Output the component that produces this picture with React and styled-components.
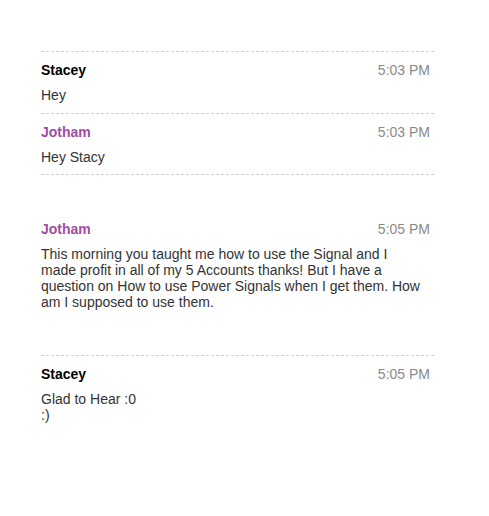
import React from 'react'
import styled, { createGlobalStyle } from 'styled-components'

const GlobalStyle = createGlobalStyle`
  html, body {
    margin: 0;
    padding: 0;
    background: #fff;
  }
  body {
    font-family: "Liberation Sans", Arial, sans-serif;
  }
`

const Thread = styled.div`
  width: 393px;
  padding: 51px 0 40px 41px;
`

const Message = styled.div`
  border-top: 1px dashed #cfcfcf;
  padding: ${({ $roomy }) => ($roomy ? '45.5px 0 45px' : '10px 0 9.5px')};
`

const Header = styled.div`
  display: flex;
  justify-content: space-between;
  align-items: center;
  padding-right: 4px;
  line-height: 16px;
  font-size: 14px;
`

const Author = styled.span`
  font-weight: bold;
  color: ${({ $me }) => ($me ? '#a34ca3' : '#000')};
`

const Time = styled.span`
  color: #8a8a8a;
`

const Body = styled.div`
  margin-top: 9px;
  padding-right: 8px;
  font-size: 14px;
  line-height: 16px;
  color: #333;
`

const messages = [
  { author: 'Stacey', time: '5:03 PM', lines: ['Hey'] },
  { author: 'Jotham', me: true, time: '5:03 PM', lines: ['Hey Stacy'] },
  {
    author: 'Jotham',
    me: true,
    roomy: true,
    time: '5:05 PM',
    lines: [
      'This morning you taught me how to use the Signal and I made profit in all of my 5 Accounts thanks! But I have a question on How to use Power Signals when I get them. How am I supposed to use them.'
    ]
  },
  { author: 'Stacey', time: '5:05 PM', lines: ['Glad to Hear :0', ':)'] }
]

export default function App() {
  return (
    <>
      <GlobalStyle />
      <Thread>
        {messages.map((m, i) => (
          <Message key={i} $roomy={m.roomy}>
            <Header>
              <Author $me={m.me}>{m.author}</Author>
              <Time>{m.time}</Time>
            </Header>
            <Body>
              {m.lines.map((line, j) => (
                <div key={j}>{line}</div>
              ))}
            </Body>
          </Message>
        ))}
      </Thread>
    </>
  )
}
